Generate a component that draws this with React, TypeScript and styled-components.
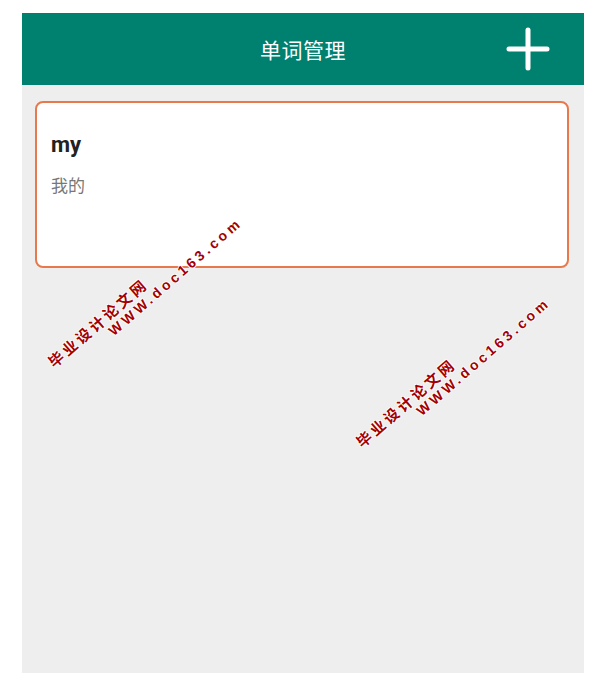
import React from "react";
import styled, {createGlobalStyle} from "styled-components";

const GlobalStyle = createGlobalStyle`
  html, body {
    margin: 0;
    padding: 0;
    background: #ffffff;
    font-family: "Noto Sans CJK SC", "Roboto", "Liberation Sans", sans-serif;
  }
`

const Page = styled.div`
  padding: 13px 21px 0 22px;
`

const Screen = styled.div`
  position: relative;
  width: 562px;
  height: 660px;
  background: #eeeeee;
  overflow: hidden;
`

const TitleBar = styled.div`
  position: relative;
  height: 72px;
  background: #00806f;
  display: flex;
  align-items: center;
  justify-content: center;
`

const Title = styled.h1`
  margin: 0;
  color: #ffffff;
  font-size: 21px;
  font-weight: 400;
  letter-spacing: 0.5px;
`

const AddButton = styled.button`
  position: absolute;
  right: 34px;
  top: 14px;
  width: 44px;
  height: 44px;
  padding: 0;
  border: none;
  background: none;
  display: flex;
  align-items: center;
  justify-content: center;
`

const List = styled.div`
  display: flex;
  flex-direction: column;
  padding: 16px 15px 0 13px;
`

const WordCard = styled.div`
  height: 167px;
  box-sizing: border-box;
  background: #ffffff;
  border: 2px solid #e8794c;
  border-radius: 8px;
  padding: 28px 15px 0 14px;
`

const Word = styled.div`
  font-family: "Roboto", "Liberation Sans", sans-serif;
  font-size: 22px;
  font-weight: 700;
  color: #222222;
  line-height: 28px;
`

const Meaning = styled.div`
  margin-top: 14px;
  font-size: 17px;
  color: #777777;
  line-height: 24px;
`

const Watermark = styled.div<{ $x: number, $y: number }>`
  position: absolute;
  left: ${p => p.$x}px;
  top: ${p => p.$y}px;
  transform: rotate(-41deg);
  transform-origin: 0 0;
  white-space: nowrap;
  color: #a40000;
  font-weight: 700;
  pointer-events: none;
  text-shadow: 1px 0 0 #fff, -1px 0 0 #fff, 0 1px 0 #fff, 0 -1px 0 #fff;
`

const MarkCn = styled.div`
  font-family: "Noto Sans CJK SC", sans-serif;
  font-size: 15px;
  line-height: 16px;
  letter-spacing: 3px;
`

const MarkUrl = styled.div`
  font-family: "Liberation Sans", sans-serif;
  font-size: 14px;
  line-height: 16px;
  letter-spacing: 3.4px;
  padding-left: 66px;
`

const PlusIcon = () => (
    <svg width="44" height="44" viewBox="0 0 44 44">
        <path d="M22 3 V41 M3 22 H41" stroke="#ffffff" strokeWidth="5" strokeLinecap="round"/>
    </svg>
)

const words = [
    {word: "my", meaning: "我的"},
]

const App: React.FC = () => {
    return (
        <Page>
            <GlobalStyle/>
            <Screen>
                <TitleBar>
                    <Title>单词管理</Title>
                    <AddButton><PlusIcon/></AddButton>
                </TitleBar>
                <List>
                    {words.map(w => (
                        <WordCard key={w.word}>
                            <Word>{w.word}</Word>
                            <Meaning>{w.meaning}</Meaning>
                        </WordCard>
                    ))}
                </List>
                <Watermark $x={23} $y={345}>
                    <MarkCn>毕业设计论文网</MarkCn>
                    <MarkUrl>WWW.doc163.com</MarkUrl>
                </Watermark>
                <Watermark $x={331} $y={425}>
                    <MarkCn>毕业设计论文网</MarkCn>
                    <MarkUrl>WWW.doc163.com</MarkUrl>
                </Watermark>
            </Screen>
        </Page>
    );
};

export default App;
